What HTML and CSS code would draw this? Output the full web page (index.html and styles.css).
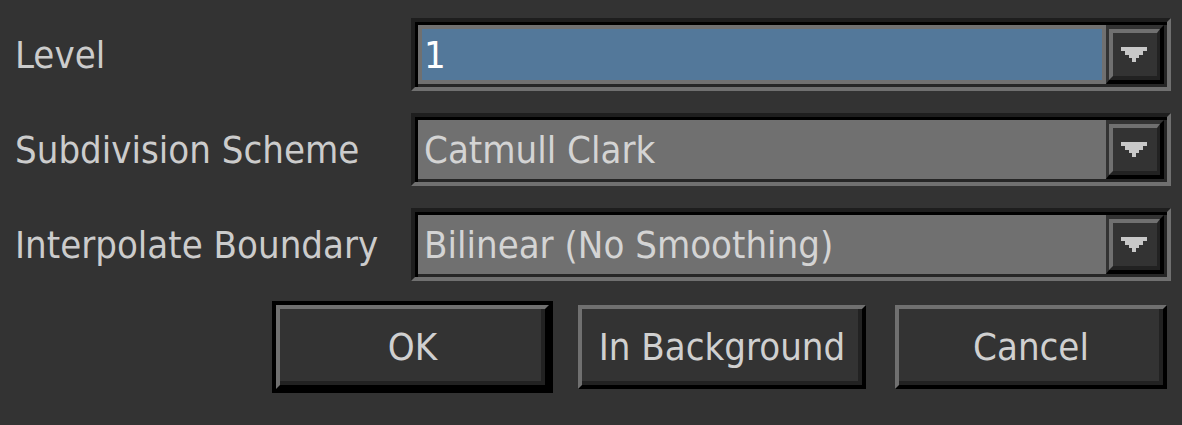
FILE: index.html
```html
<!DOCTYPE html>
<html lang="en">
<head>
    <meta charset="UTF-8">
    <title>Subdivide Options</title>
    <link rel="stylesheet" href="styles.css">
</head>
<body>
    <div class="dialog">
        <!-- Option rows -->
        <div class="options">
            <div class="row">
                <span class="row-label">Level</span>
                <div class="combo">
                    <div class="combo-field combo-field-active">1</div>
                    <div class="combo-btn">
                        <div class="combo-btn-face">
                            <svg class="arrow" width="26" height="15" viewBox="0 0 26 15"><polygon points="0,0 26,0 26,4 22,4 22,8 18,8 18,11 15,11 15,15 11,15 11,11 8,11 8,8 4,8 4,4 0,4"/></svg>
                        </div>
                    </div>
                </div>
            </div>
            <div class="row">
                <span class="row-label">Subdivision Scheme</span>
                <div class="combo">
                    <div class="combo-field">Catmull Clark</div>
                    <div class="combo-btn">
                        <div class="combo-btn-face">
                            <svg class="arrow" width="26" height="15" viewBox="0 0 26 15"><polygon points="0,0 26,0 26,4 22,4 22,8 18,8 18,11 15,11 15,15 11,15 11,11 8,11 8,8 4,8 4,4 0,4"/></svg>
                        </div>
                    </div>
                </div>
            </div>
            <div class="row">
                <span class="row-label">Interpolate Boundary</span>
                <div class="combo">
                    <div class="combo-field">Bilinear (No Smoothing)</div>
                    <div class="combo-btn">
                        <div class="combo-btn-face">
                            <svg class="arrow" width="26" height="15" viewBox="0 0 26 15"><polygon points="0,0 26,0 26,4 22,4 22,8 18,8 18,11 15,11 15,15 11,15 11,11 8,11 8,8 4,8 4,4 0,4"/></svg>
                        </div>
                    </div>
                </div>
            </div>
        </div>

        <!-- Dialog buttons -->
        <div class="actions">
            <button class="btn btn-ok">OK</button>
            <button class="btn btn-bg">In Background</button>
            <button class="btn btn-cancel">Cancel</button>
        </div>
    </div>
</body>
</html>
```

FILE: styles.css
```css
/* General Page Styling */
html, body {
    margin: 0;
    height: 100%;
    background-color: #333333;
    color: #cccccc;
    font-family: "DejaVu Sans Condensed", "DejaVu Sans", sans-serif;
    font-stretch: condensed;
    font-size: 38px;
}

.dialog {
    padding: 18px 11px 0 15px;
}

/* Option rows */
.options {
    display: flex;
    flex-direction: column;
    gap: 22px;
}

.row {
    display: flex;
    align-items: center;
    height: 73px;
}

.row-label {
    width: 396px;
    white-space: nowrap;
}

/* Combo box */
.combo {
    flex: 1;
    height: 100%;
    box-sizing: border-box;
    display: flex;
    padding: 3px;
    border-style: solid;
    border-width: 4px;
    border-color: #1e1e1e #707070 #707070 #1e1e1e;
    box-shadow: inset 3px 3px 0 #000000, inset -3px -3px 0 #262626;
}

.combo-field {
    flex: 1;
    display: flex;
    align-items: center;
    padding-left: 2px;
    border: 4px solid #707070;
    background-color: #707070;
    color: #d4d4d4;
    white-space: nowrap;
}

.combo-field-active {
    background-color: #53789a;
    color: #ffffff;
}

.combo-btn {
    width: 51px;
    display: flex;
    border-style: solid;
    border-width: 4px 4px 4px 3px;
    border-color: #333333 #000000 #000000 #333333;
}

.combo-btn-face {
    flex: 1;
    display: flex;
    align-items: center;
    justify-content: center;
    background-color: #333333;
    border-style: solid;
    border-width: 4px 3px 4px 4px;
    border-color: #707070 #222222 #222222 #707070;
}

.arrow {
    fill: #c8c8c8;
    margin-right: 2px;
}

/* Dialog buttons */
.actions {
    display: flex;
    justify-content: flex-end;
    gap: 29px;
    margin-top: 24px;
    margin-right: 4px;
}

.btn {
    height: 84px;
    box-sizing: border-box;
    padding: 0;
    background-color: #333333;
    color: #d0d0d0;
    font-family: inherit;
    font-stretch: condensed;
    font-size: 38px;
    border-style: solid;
    border-width: 4px;
    border-color: #707070 #000000 #000000 #707070;
    box-shadow: inset -4px -4px 0 #222222;
}

.btn-ok {
    width: 273px;
    outline: 4px solid #000000;
}

.btn-bg {
    width: 288px;
}

.btn-cancel {
    width: 272px;
}
```
